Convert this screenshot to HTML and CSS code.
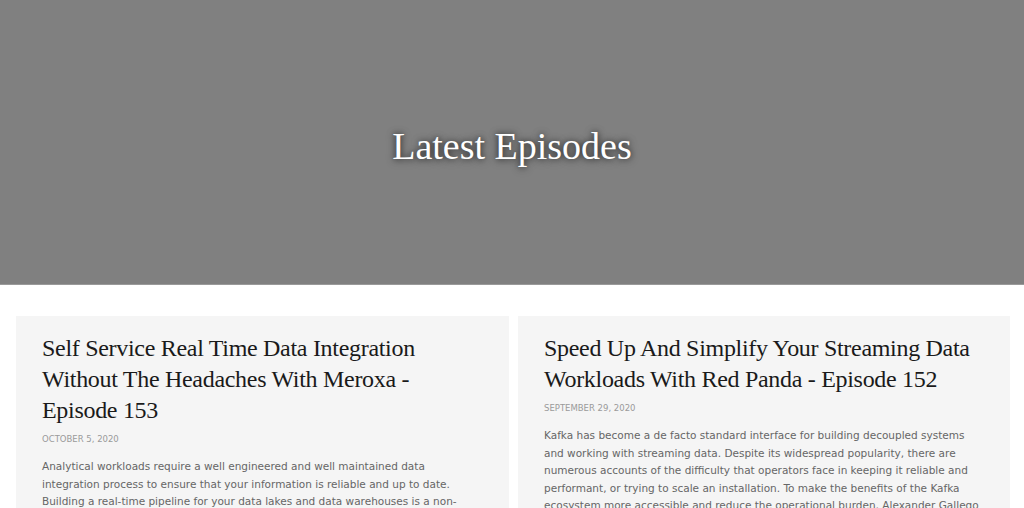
FILE: index.html
```html
<!DOCTYPE html>
<html lang="en">
<head>
<meta charset="utf-8">
<title>Latest Episodes</title>
<link rel="stylesheet" href="styles.css">
</head>
<body>
<header class="hero">
  <h1 class="hero-title">Latest Episodes</h1>
</header>
<main class="episodes">
  <article class="card">
    <h2 class="card-title">Self Service Real Time Data Integration Without The Headaches With Meroxa - Episode 153</h2>
    <div class="card-date">October 5, 2020</div>
    <p class="card-text">Analytical workloads require a well engineered and well maintained data integration process to ensure that your information is reliable and up to date. Building a real-time pipeline for your data lakes and data warehouses is a non-trivial effort, requiring a substantial investment of time and energy.</p>
  </article>
  <article class="card">
    <h2 class="card-title">Speed Up And Simplify Your Streaming Data Workloads With Red Panda - Episode 152</h2>
    <div class="card-date">September 29, 2020</div>
    <p class="card-text">Kafka has become a de facto standard interface for building decoupled systems and working with streaming data. Despite its widespread popularity, there are numerous accounts of the difficulty that operators face in keeping it reliable and performant, or trying to scale an installation. To make the benefits of the Kafka ecosystem more accessible and reduce the operational burden, Alexander Gallego and his team at Vectorized created the Red Panda engine.</p>
  </article>
</main>
</body>
</html>
```

FILE: styles.css
```css
html, body {
  margin: 0;
  padding: 0;
  background: #ffffff;
}
body {
  font-family: "Liberation Serif", serif;
  overflow: hidden;
}
.hero {
  height: 285px;
  background: #808080;
  display: flex;
  align-items: center;
  justify-content: center;
  box-sizing: border-box;
  border-bottom: 1px solid #9a9a9a;
}
.hero-title {
  margin: 8px 0 0 0;
  font-family: "Liberation Serif", serif;
  font-weight: normal;
  font-size: 38px;
  color: #ffffff;
  text-shadow: 0 0 6px rgba(0,0,0,0.6), 0 1px 10px rgba(0,0,0,0.35);
}
.episodes {
  display: grid;
  grid-template-columns: 493px 492px;
  column-gap: 9px;
  padding: 31px 14px 0 16px;
}
.card {
  background: #f5f5f5;
  padding: 17px 26px 20px 26px;
}
.card-title {
  margin: 0;
  font-family: "Liberation Serif", serif;
  font-weight: normal;
  font-size: 24px;
  letter-spacing: -0.3px;
  line-height: 31px;
  color: #1a1a1a;
}
.card-date {
  margin-top: 7px;
  font-family: "DejaVu Sans", sans-serif;
  font-size: 8.5px;
  line-height: 12px;
  text-transform: uppercase;
  color: #9a9a9a;
}
.card-text {
  margin: 13px 0 0 0;
  font-family: "DejaVu Sans", sans-serif;
  font-size: 10.5px;
  line-height: 17.5px;
  color: #666666;
}
```
